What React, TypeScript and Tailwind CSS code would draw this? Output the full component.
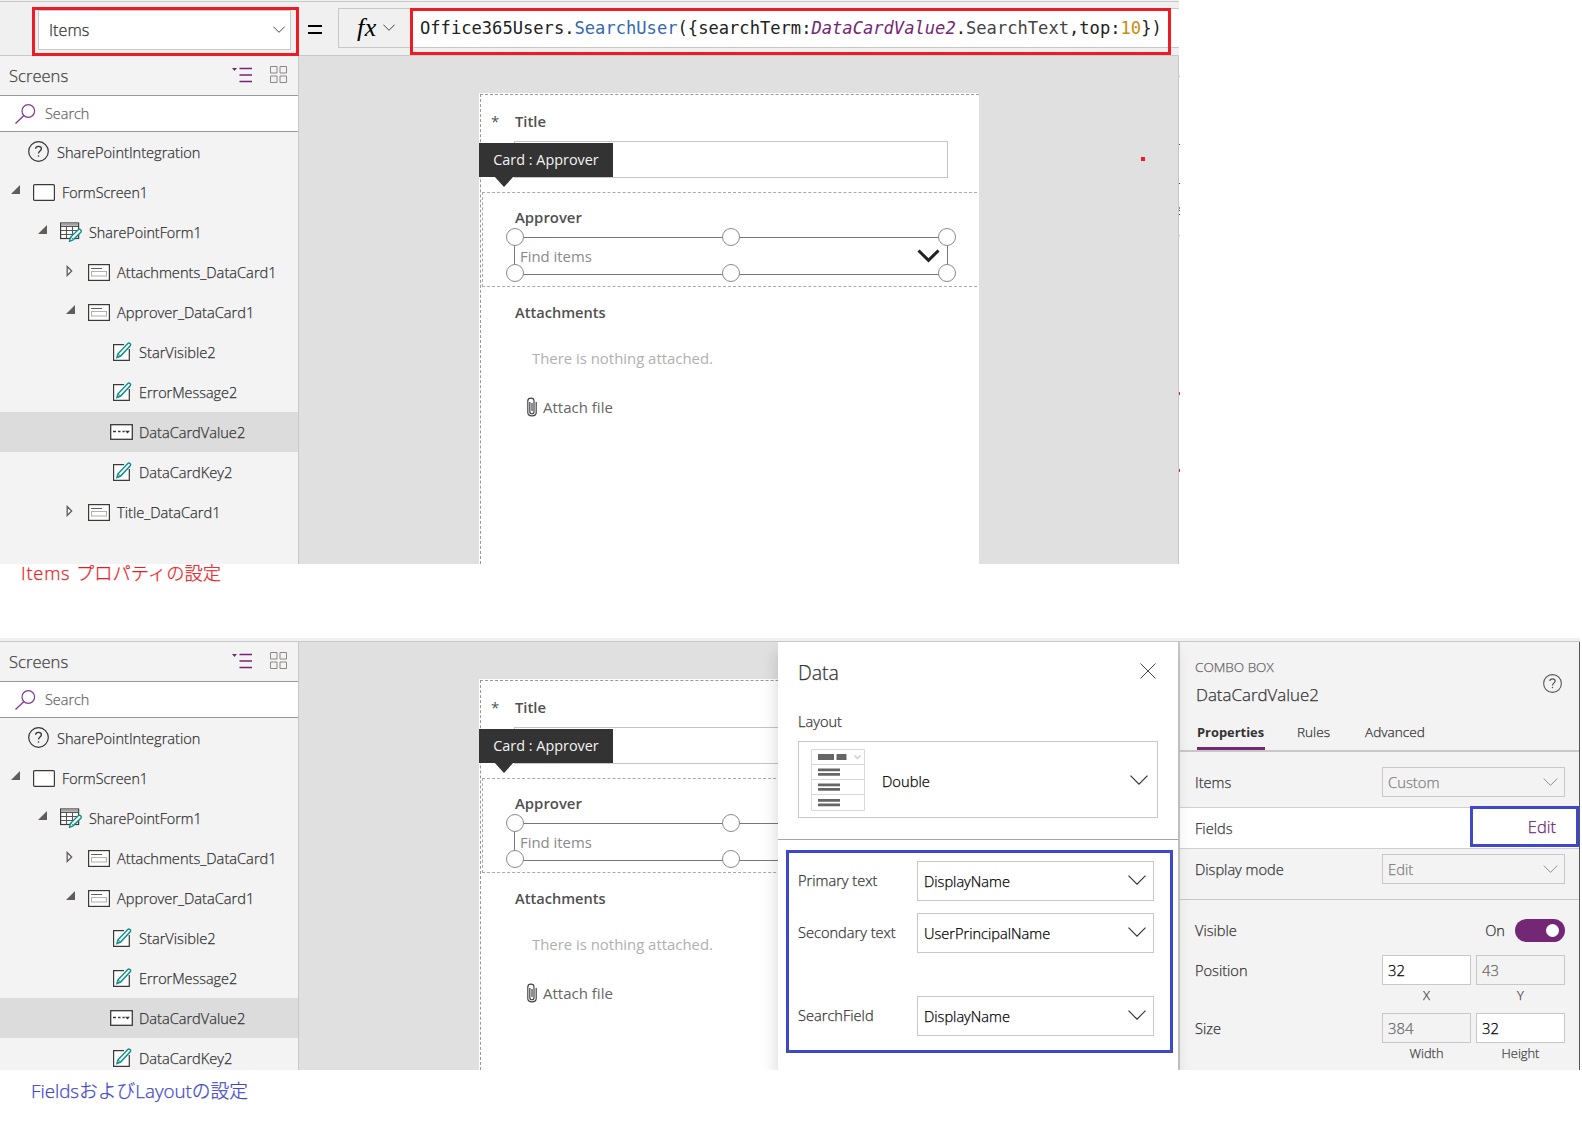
import type { ReactNode } from "react";
import clsx from "clsx";

type IconProps = { className?: string };

function Chevron({ className }: IconProps) {
  return (
    <svg viewBox="0 0 18 10" fill="none" stroke="currentColor" strokeWidth="1.15" className={className}>
      <path d="M0.5 0.7 9 9.2 17.5 0.7" />
    </svg>
  );
}

function HelpIcon({ className }: IconProps) {
  return (
    <svg viewBox="0 0 21 21" fill="none" stroke="currentColor" className={className}>
      <circle cx="10.5" cy="10.5" r="9.8" strokeWidth="1.2" />
      <path d="M7.6 7.8c.1-1.5 1.3-2.5 2.9-2.5 1.7 0 2.9 1 2.9 2.5 0 2.3-2.9 2.3-2.9 4.8" strokeWidth="1.3" />
      <circle cx="10.5" cy="15" r=".8" fill="currentColor" stroke="none" />
    </svg>
  );
}

function ScreenIcon() {
  return (
    <svg width="22" height="17" viewBox="0 0 22 17">
      <rect x=".6" y=".6" width="20.8" height="15.8" rx="1" fill="#fff" stroke="#3b3a39" strokeWidth="1.2" />
    </svg>
  );
}

function FormIcon() {
  return (
    <svg width="22" height="20" viewBox="0 0 22 20" fill="none">
      <rect x=".6" y="1" width="18" height="15.5" fill="#fff" stroke="#3b3a39" strokeWidth="1.2" />
      <rect x="1" y="1.5" width="17.2" height="2.3" fill="#a8a6a4" />
      <path d="M1 4.5h17.5M1 8.5h17.5M1 12.5h12M6.5 4.5v12M12.5 4.5v9" stroke="#555" strokeWidth="1.1" />
      <path d="M9.5 19.3l1-4 7.7-7.6c1.7-1.3 3.9.8 2.6 2.5l-7.7 7.6z" fill="#fff" stroke="#0f8f88" strokeWidth="1.4" />
      <path d="M11 15.2l2.3 2.3" stroke="#0f8f88" />
    </svg>
  );
}

function CardIcon() {
  return (
    <svg width="22" height="17" viewBox="0 0 22 17" fill="none">
      <rect x=".6" y=".6" width="20.8" height="15.8" fill="#fff" stroke="#3b3a39" strokeWidth="1.2" />
      <path d="M3 4.5h11" stroke="#605e5c" />
      <rect x="3.5" y="7.5" width="15" height="4.5" stroke="#b3b0ad" />
    </svg>
  );
}

function EditIcon() {
  return (
    <svg width="20" height="20" viewBox="0 0 20 20" fill="none">
      <path d="M2 3h11l4 3.5V18H2z" fill="#fff" />
      <path d="M12 2.7H1.6v15.6h15.7V7" stroke="#3b3a39" strokeWidth="1.2" />
      <path d="M5 15.5l1-3.7L15.8 1.5c1.5-1.2 3.5.6 2.4 2.2L8.6 14z" fill="#fff" stroke="#0f8f88" strokeWidth="1.5" />
      <path d="M6 11.8L8.6 14" stroke="#0f8f88" />
    </svg>
  );
}

function ComboIcon() {
  return (
    <svg width="23" height="16" viewBox="0 0 23 16" fill="none">
      <rect x=".7" y=".7" width="21.6" height="14.6" fill="#fff" stroke="#3b3a39" strokeWidth="1.3" />
      <path d="M3 7.5h3M8 7.5h2.5M12.5 7.5h2.2" stroke="#3b3a39" strokeWidth="1.3" />
      <path d="M15 6.8h5L17.5 9.5z" fill="#3b3a39" />
    </svg>
  );
}

function Caret({ open }: { open: boolean }) {
  return open ? (
    <svg width="9" height="9" viewBox="0 0 9 9" className="-mt-[5px]">
      <path d="M9 0v9H0z" fill="#605e5c" />
    </svg>
  ) : (
    <svg width="7" height="12" viewBox="0 0 7 12" className="-mt-[3px]" fill="none">
      <path d="M1.2 1.5L5.7 6 1.2 10.5z" stroke="#605e5c" strokeWidth="1.3" />
    </svg>
  );
}

const icons = {
  help: <HelpIcon className="-mt-[1px] size-[21px] text-[#333]" />,
  screen: <ScreenIcon />,
  form: <FormIcon />,
  card: <CardIcon />,
  edit: <EditIcon />,
  combo: <ComboIcon />,
};

type TreeItem = { label: string; icon: keyof typeof icons; indent: string; open?: boolean; selected?: boolean; text: string };

const tree: TreeItem[] = [
  { label: "SharePointIntegration", icon: "help", indent: "pl-[28px]", text: "pt-0.5 text-[14.6px]" },
  { label: "FormScreen1", icon: "screen", indent: "pl-[11px]", open: true, text: "pt-px text-[14.25px]" },
  { label: "SharePointForm1", icon: "form", indent: "pl-[38px]", open: true, text: "pt-0.5 text-[14.35px]" },
  { label: "Attachments_DataCard1", icon: "card", indent: "pl-[66px]", open: false, text: "pt-0.5 text-[14.65px]" },
  { label: "Approver_DataCard1", icon: "card", indent: "pl-[66px]", open: true, text: "pt-0.5 text-[14.65px]" },
  { label: "StarVisible2", icon: "edit", indent: "pl-[112px]", text: "pt-px text-[14.65px]" },
  { label: "ErrorMessage2", icon: "edit", indent: "pl-[112px]", text: "pt-0.5 text-[14.4px]" },
  { label: "DataCardValue2", icon: "combo", indent: "pl-[110px]", selected: true, text: "pt-0.5 text-[14.6px]" },
  { label: "DataCardKey2", icon: "edit", indent: "pl-[112px]", text: "pt-0.5 text-[14.6px]" },
  { label: "Title_DataCard1", icon: "card", indent: "pl-[66px]", open: false, text: "pt-0.5 text-[14.65px]" },
];

function TreeRow({ item }: { item: TreeItem }) {
  return (
    <div className={clsx("flex h-10 shrink-0 items-center", item.indent, item.selected && "bg-[#dcdcdc]")}>
      {item.open !== undefined && (
        <span className="flex w-[22px] shrink-0">
          <Caret open={item.open} />
        </span>
      )}
      <span className={clsx("shrink-0", item.icon === "edit" ? "w-[27px]" : "w-[29px]")}>{icons[item.icon]}</span>
      <span className={clsx("whitespace-nowrap text-[#333]", item.text)}>{item.label}</span>
    </div>
  );
}

// thickens the light face a little so it reads as semilight
const semilight = "[-webkit-text-stroke:0.25px_currentColor]";

function Sidebar({ items }: { items: TreeItem[] }) {
  return (
    <aside className={clsx("flex w-[299px] shrink-0 flex-col overflow-hidden border-r border-[#c8c8c8] bg-[#f3f3f3]", semilight)}>
      <div className="flex h-[39px] shrink-0 items-center pb-0.5 pl-[9px] pr-[11px]">
        <span className="flex-1 pt-[3px] text-[16.6px] text-[#444]">Screens</span>
        <svg width="20" height="16" viewBox="0 0 20 16" className="mr-[18px]">
          <path d="M0 1h5L2.5 4z" fill="#742774" />
          <path d="M7.5 1.5H20M7.5 8H20M7.5 14.5H20" stroke="#742774" strokeWidth="1.3" />
        </svg>
        <svg width="17" height="17" viewBox="0 0 17 17" fill="none" stroke="#8a8886">
          <path d="M.5.5h6.5V7H.5zM10 .5h6.5V7H10zM.5 10h6.5v6.5H.5zM10 10h6.5v6.5H10z" />
        </svg>
      </div>
      <div className="-mr-px flex h-[37px] shrink-0 items-center border border-l-0 border-[#999] bg-white pl-[15px]">
        <svg width="21" height="20" viewBox="0 0 21 20" fill="none" stroke="#84398a" strokeWidth="1.2">
          <circle cx="13.3" cy="7" r="6.3" />
          <path d="M9 11.5L.5 19.5" />
        </svg>
        <span className="ml-[9px] text-[14.4px] text-[#666]">Search</span>
      </div>
      {items.map((item) => (
        <TreeRow key={item.label} item={item} />
      ))}
    </aside>
  );
}

const handles = [
  "left-[23px] top-[35px]",
  "left-[239px] top-[35px]",
  "left-[455px] top-[35px]",
  "left-[23px] top-[71px]",
  "left-[239px] top-[71px]",
  "left-[455px] top-[71px]",
];

function FormCanvas() {
  return (
    <div className="flex min-w-0 flex-1 overflow-hidden bg-[#e0e0e0] pl-[180px] pt-[37px] font-normal">
      <div className="relative w-[500px] shrink-0 bg-white pl-px pt-px">
        <div className="h-full border-l border-t border-dashed border-[#999]">
          <div className="flex h-[97px] flex-col">
            <div className="flex h-[46px] items-start pl-[10px] pt-[16px]">
              <span className="w-[24px] text-[15px] leading-5 text-[#555]">*</span>
              <span className="text-[14.8px] font-semibold leading-5 text-[#505050]">Title</span>
            </div>
            <div className="ml-[33px] h-[37px] w-[434px] border border-[#c4c4c4]" />
          </div>
          <div className="relative ml-px mr-[2px] h-[95px] border-y border-l border-dashed border-[#aaa] pl-[31px]">
            <div className="h-[44px] pl-px pt-[14px] text-[14.9px] font-semibold leading-5 text-[#505050]">Approver</div>
            <div className="flex h-[38px] w-[434px] items-center border-[1.5px] border-[#777] pl-[5px] pr-[7px]">
              <span className="flex-1 pt-px text-[14.9px] text-[#8a8a8a]">Find items</span>
              <svg width="23" height="14" viewBox="0 0 23 14" fill="none" stroke="#222" strokeWidth="3">
                <path d="M1.5 1.5l10 9.8 10-9.8" />
              </svg>
            </div>
            {handles.map((pos) => (
              <span key={pos} className={clsx("absolute size-[18px] rounded-full border border-[#8a8a8a] bg-white", pos)} />
            ))}
          </div>
          <div className="pl-[34px] pt-[15px]">
            <div className="text-[14.6px] font-semibold leading-5 text-[#505050]">Attachments</div>
            <div className="ml-[17px] mt-[26px] text-[14.9px] leading-5 text-[#b0b0b0]">There is nothing attached.</div>
            <div className="ml-3 mt-[29px] flex items-center">
              <svg width="10" height="20" viewBox="0 0 10 20" fill="none" stroke="#444" strokeWidth="1.2">
                <path d="M2.8 5v9.5c0 3 4.2 3 4.2 0V4C7 .2.8.2.8 4v11.5c0 4.5 8.4 4.5 8.4 0V5" />
                <path d="M5 6v8" />
              </svg>
              <span className="ml-[6px] text-[15px] leading-5 text-[#666]">Attach file</span>
            </div>
          </div>
        </div>
        {/* selection tooltip for the parent card */}
        <div className="absolute left-0 top-[50px] flex h-[34px] w-[134px] items-center justify-center bg-[#333] text-[14.4px] text-[#f3f3f3]">
          Card : Approver
          <svg width="20" height="11" viewBox="0 0 20 11" className="absolute left-[15px] top-[33px]">
            <path d="M0 0h20L10 11z" fill="#333" />
          </svg>
        </div>
      </div>
    </div>
  );
}

function FormulaBar() {
  return (
    <div className="flex h-[56px] shrink-0 flex-col border-b border-[#c8c8c8] bg-[#f0f0f0]">
      <div className="h-[2px] shrink-0 border-b border-[#c8c8c8]" />
      <div className="relative flex h-[53px] items-start">
        <div className="ml-[32px] mt-[5px] h-[49px] w-[267px] shrink-0 border-[3px] border-[#ed1c24] pl-[3px] pr-[5px]">
          <div className="flex h-[40px] items-center border border-[#c8c8c8] bg-white pl-2.5 pr-[5px]">
            <span className={clsx("flex-1 text-[16.2px] text-[#333]", semilight)}>Items</span>
            <Chevron className="mb-0.5 h-[7px] w-3 text-[#111]" />
          </div>
        </div>
        <div className="ml-[9px] mt-[23px] h-[9px] w-[14px] shrink-0 border-y-[2px] border-black" />
        <div className="ml-[16px] mt-[6px] flex h-[40px] flex-1 border border-r-0 border-[#c8c8c8]">
          <div className="flex w-[74px] shrink-0 items-center pl-[18px]">
            <span className="w-[26px] pb-[2px] font-['Liberation_Serif'] text-[26px] font-normal italic tracking-[0.5px] text-black">fx</span>
            <Chevron className="mb-px h-[7px] w-3 text-[#111]" />
          </div>
          <div className="flex flex-1 items-center whitespace-pre bg-white pl-[7px] pt-[2px] font-['DejaVu_Sans_Mono'] text-[17.12px] font-normal text-[#222]">
            Office365Users.<span className="text-[#3568b0]">SearchUser</span>({"{"}searchTerm:
            <span className="italic text-[#742774]">DataCardValue2</span>.<span className="text-[#444]">SearchText</span>,top:
            <span className="text-[#c98b10]">10</span>
            {"})"}
          </div>
        </div>
        {/* highlight drawn over the formula */}
        <div className="absolute left-[410px] top-[6px] h-[47px] w-[761px] border-[3px] border-[#ed1c24]" />
      </div>
    </div>
  );
}

const select = "flex items-center border border-[#c8c8c8]";

function FieldRow({ label, value, className }: { label: string; value: string; className?: string }) {
  return (
    <div className={clsx("flex items-center", className)}>
      <span className="w-[119px] text-[14.6px] text-[#333]">{label}</span>
      <div className={clsx(select, "h-[40px] w-[237px] pl-[6px] pr-[7px]")}>
        <span className="flex-1 pt-0.5 text-[14.6px] text-black">{value}</span>
        <Chevron className="mb-0.5 h-[10px] w-[18px] text-[#333]" />
      </div>
    </div>
  );
}

function LayoutThumb() {
  return (
    <svg width="54" height="62" viewBox="0 0 54 62" fill="none" className="mt-px">
      <path d="M.5.5h53v61H.5zM.5 15.5h53M.5 30.5h53M.5 45.5h53" stroke="#d8d8d8" />
      <path d="M7 5h16v6H7zM25.5 5h10v6h-10zM7 19.5h22v2.8H7zM7 24h22v2.8H7zM7 34.5h22v2.8H7zM7 39h22v2.8H7zM7 50h22v2.8H7zM7 54.5h22v2.8H7z" fill="#666" />
      <path d="M43.5 6.5l3 3 3-3" stroke="#ccc" strokeWidth="1.3" />
    </svg>
  );
}

function DataPanel() {
  return (
    <section className={clsx("relative flex w-[400px] shrink-0 flex-col bg-white shadow-[-2px_10px_14px_rgba(0,0,0,0.14)]", semilight)}>
      <div className="flex items-center pl-[20px] pr-[22px] pt-[16px]">
        <h2 className="flex-1 text-[19.5px] leading-[30px] text-[#333]">Data</h2>
        <svg width="16" height="16" viewBox="0 0 16 16" stroke="#444" className="-mt-[4px]">
          <path d="M.5.5l15 15M15.5.5l-15 15" />
        </svg>
      </div>
      <div className="mt-[23px] pl-[20px] text-[14.6px] leading-5 text-[#333]">Layout</div>
      <div className={clsx(select, "ml-5 mt-[10px] h-[77px] w-[360px] shrink-0 pl-3 pr-[9px]")}>
        <LayoutThumb />
        <span className="ml-[17px] flex-1 pt-1 text-[14.7px] text-black">Double</span>
        <Chevron className="h-[10px] w-[18px] text-[#333]" />
      </div>
      <div className="mt-[21px] h-px shrink-0 bg-[#a6a6a6]" />
      <div className="ml-2 mt-[10px] h-[203px] w-[387px] shrink-0 border-[3px] border-[#3f48cc] pl-[9px] pt-[8px]">
        <FieldRow label="Primary text" value="DisplayName" />
        <FieldRow label="Secondary text" value="UserPrincipalName" className="mt-3" />
        <FieldRow label="SearchField" value="DisplayName" className="mt-[43px]" />
      </div>
    </section>
  );
}

function PropertySelect({ value }: { value: string }) {
  return (
    <div className={clsx(select, "h-[30px] w-[183px] pl-[5px] pr-[6px] text-[#808080]")}>
      <span className="flex-1 text-[14.8px]">{value}</span>
      <Chevron className="h-[8px] w-[15px] text-[#888]" />
    </div>
  );
}

function NumberInput({ value, caption, disabled }: { value: string; caption: string; disabled?: boolean }) {
  return (
    <div className="w-[89px]">
      <div className={clsx(select, "h-[30px] pl-[5px] text-[14.8px]", disabled ? "text-[#666]" : "bg-white text-black")}>{value}</div>
      <div className="pt-[2px] text-center text-[12.9px] leading-[17px] text-[#444]">{caption}</div>
    </div>
  );
}

function PropertyRow({ label, className, children }: { label: string; className?: string; children: ReactNode }) {
  return (
    <div className={clsx("flex justify-between pl-[15px] pr-[14px]", className)}>
      <span className="text-[14.6px] leading-[30px] text-[#333]">{label}</span>
      {children}
    </div>
  );
}

function PropertiesPanel() {
  return (
    <section className={clsx("flex w-[402px] shrink-0 flex-col border-l-2 border-r border-l-[#c8c8c8] border-r-[#555] bg-[#f3f3f3]", semilight)}>
      <div className="flex h-[70px] shrink-0 justify-between pl-[15px] pr-[17px]">
        <div className="pt-[15px]">
          <div className="text-[13.5px] leading-5 text-[#666]">COMBO BOX</div>
          <div className="pl-px pt-[2px] text-[16.9px] leading-[32px] text-[#333]">DataCardValue2</div>
        </div>
        <HelpIcon className="mt-[32px] size-[19px] text-[#555]" />
      </div>
      <div className="flex h-[40px] shrink-0 border-b-2 border-[#c8c8c8] pl-[17px] text-[13.6px] leading-[40px] text-[#333]">
        <span className="h-[38px] w-[68px] whitespace-nowrap border-b-[3px] border-[#742774] text-[12.9px] font-bold [-webkit-text-stroke:0]">Properties</span>
        <span className="ml-[32px] w-[68px]">Rules</span>
        <span>Advanced</span>
      </div>
      <PropertyRow label="Items" className="h-[55px] shrink-0 pt-[15px]">
        <PropertySelect value="Custom" />
      </PropertyRow>
      <div className="flex h-[42px] shrink-0 items-start border-y border-[#d0d0d0] bg-white pl-[15px]">
        <span className="flex-1 text-[14.6px] leading-[40px] text-[#333]">Fields</span>
        <span className="-mt-[2px] flex h-[41px] w-[109px] items-center justify-end border-[3px] border-[#3f48cc] pr-5 pt-[2px] text-[16.5px] text-[#742774]">Edit</span>
      </div>
      <PropertyRow label="Display mode" className="h-[51px] shrink-0 border-b border-[#c8c8c8] pt-[5px]">
        <PropertySelect value="Edit" />
      </PropertyRow>
      <PropertyRow label="Visible" className="h-[55px] shrink-0 pt-[15px]">
        <div className="mt-[4px] flex h-[23px] items-center">
          <span className="mr-[10px] pt-px text-[14.6px] text-[#333]">On</span>
          <span className="flex h-[23px] w-[50px] items-center justify-end rounded-full bg-[#742774] pr-[6px]">
            <span className="size-[13px] rounded-full bg-white" />
          </span>
        </div>
      </PropertyRow>
      <PropertyRow label="Position" className="h-[58px] shrink-0">
        <div className="flex gap-[5px]">
          <NumberInput value="32" caption="X" />
          <NumberInput value="43" caption="Y" disabled />
        </div>
      </PropertyRow>
      <PropertyRow label="Size" className="shrink-0">
        <div className="flex gap-[5px]">
          <NumberInput value="384" caption="Width" disabled />
          <NumberInput value="32" caption="Height" />
        </div>
      </PropertyRow>
    </section>
  );
}

// slivers of the neighbouring pane left at the right edge of the first capture
const slivers = [
  "top-[76px] h-px bg-[#c8c8c8]",
  "top-[144px] h-px bg-[#742774]",
  "top-[183px] h-px bg-[#742774]",
  "top-[207px] h-[2px] bg-[#a573a5]",
  "top-[210px] h-px bg-[#742774]",
  "top-[214px] h-px bg-[#742774]",
  "top-[235px] h-px bg-[#c8c8c8]",
  "top-[392px] h-[3px] bg-[#ed1c24]",
  "top-[469px] h-[3px] bg-[#ed1c24]",
];

export default function App() {
  return (
    <div className="h-[1134px] w-[1582px] overflow-hidden bg-white font-['Open_Sans','Noto_Sans_CJK_JP',sans-serif] font-light">
      <div className="relative flex h-[564px] w-[1179px] flex-col">
        <FormulaBar />
        <div className="flex min-h-0 flex-1">
          <Sidebar items={tree} />
          <FormCanvas />
          <div className="w-px bg-[#c8c8c8]" />
        </div>
        <span className="absolute left-[1141px] top-[157px] size-1 bg-[#ed1c24]" />
        {slivers.map((s) => (
          <span key={s} className={clsx("absolute left-[1179px] w-px", s)} />
        ))}
      </div>
      <p className={clsx("h-[74px] pl-[21px] text-[18.3px] leading-[18px] text-[#ed1c24]", semilight)}>
        <span className="tracking-[0.8px]">Items </span>プロパティの設定
      </p>
      <div className="flex h-[432px] w-[1580px] flex-col">
        <div className="h-[4px] shrink-0 border-b border-[#c8c8c8] bg-[#f0f0f0]" />
        <div className="flex min-h-0 flex-1 overflow-hidden">
          <Sidebar items={tree.slice(0, 9)} />
          <FormCanvas />
          <DataPanel />
          <PropertiesPanel />
        </div>
      </div>
      <p className={clsx("pl-[31px] pt-[10px] text-[18.75px] leading-[22px] text-[#3f48cc]", semilight)}>FieldsおよびLayoutの設定</p>
    </div>
  );
}
